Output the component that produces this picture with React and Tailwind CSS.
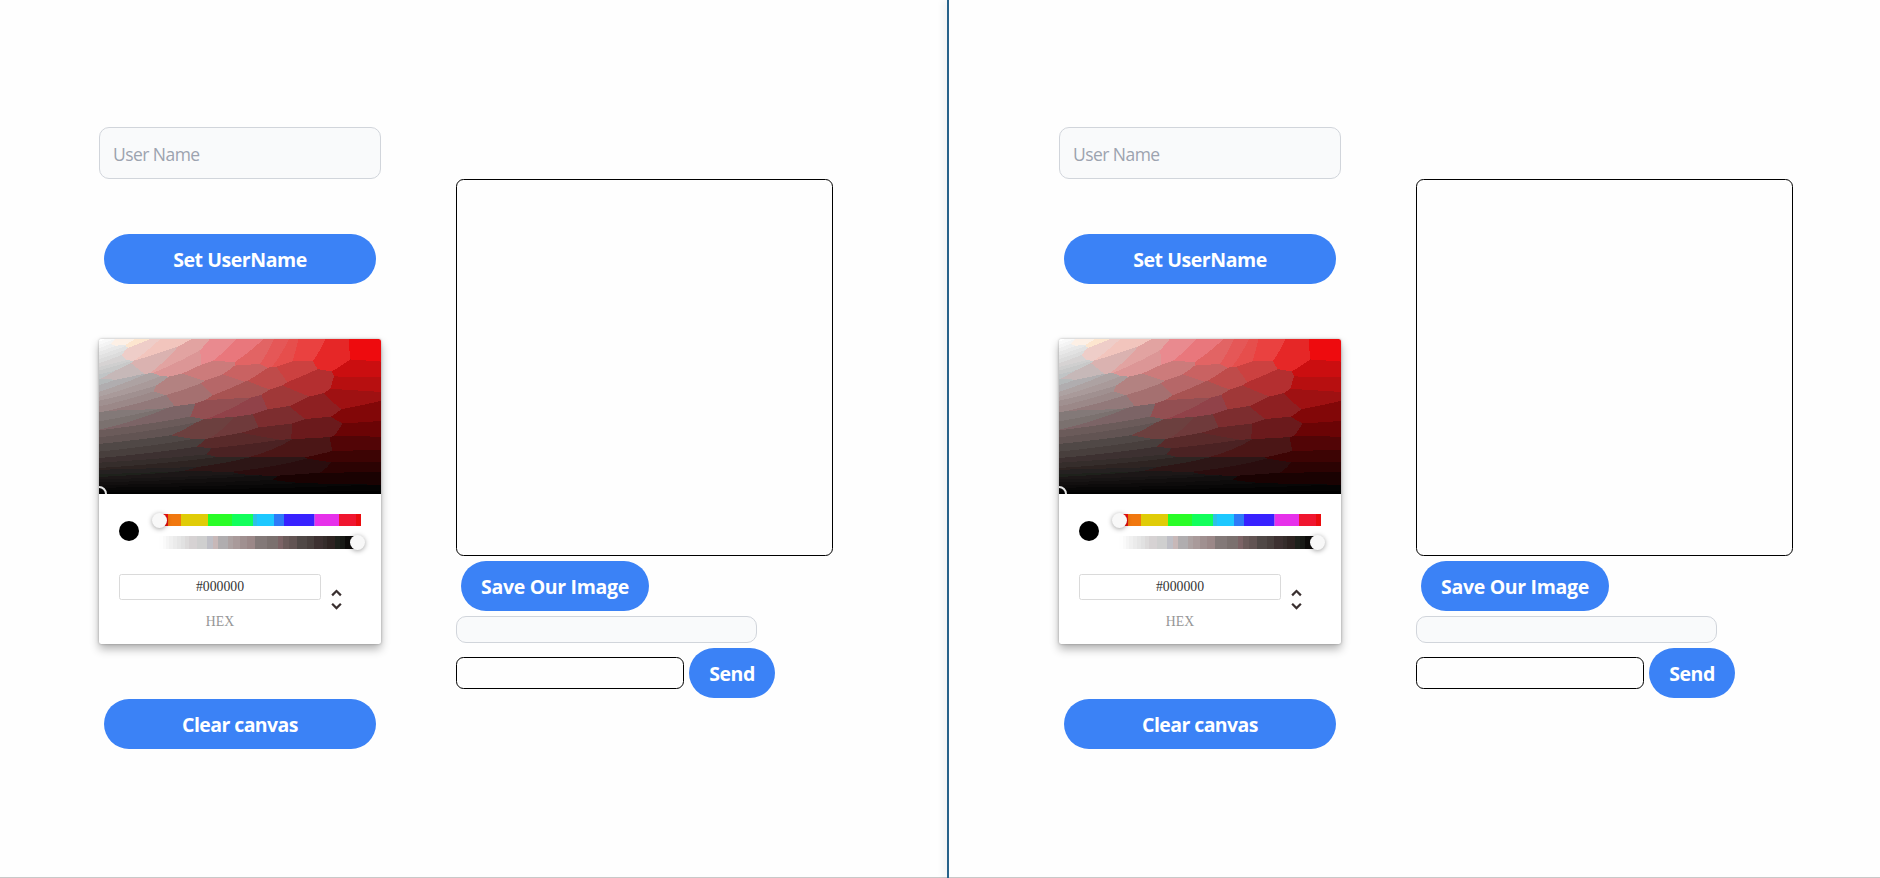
import { useLayoutEffect, useRef } from "react";

const SWATCHES = (
  "ee0b0e e62727 ea4140 e64e4c e55757 e26464 e9777c e98a8f e2a3a1 dc9696 f2c5bd eecdc8 fde6cf fdf0e6 dab2b0 " +
  "cc7b7b c96262 bf4b4a cc4140 b42f30 cb0e10 b70f10 9f1112 820708 6b0405 520506 3d0404 2c0303 1a0202 8e2022 " +
  "a03838 7d2d2f a85352 b66768 b38281 a57070 934f52 914249 6c403f 6f3a3b 642627 6b1a1c 4b2223 4b1616 2a0d0e " +
  "2d1616 592a2a ffffff f9f9f9 f4f4f4 eeeeee e8e8e8 e2e2e2 dcdcdc d6d3d3 cfcfcf c8c9c9 c0c4c5 c6b8b8 b5b9ba " +
  "b0adaf ada2a2 a99a9a a09090 9b8888 92797a 837978 7b716f 7c6466 6b5b5a 625453 504846 483f3d 3d3131 352d2b " +
  "2e2422 252121 1e211b 1c1717 171414 120f0f 0d0b0b 080707 040303 000000"
)
  .split(" ")
  .map((h) => [0, 2, 4].map((i) => parseInt(h.slice(i, i + 2), 16)));

const HUES = [
  [9, "#ed0f0f"], [13, "#f1780f"], [27, "#e0cc07"], [24.3, "#29fd27"], [20.7, "#12ff5b"],
  [4, "#2fc0e6"], [17, "#1dc8ff"], [10, "#2d7af8"], [30.3, "#3821ff"], [0.7, "#a55cf0"],
  [24, "#e631ea"], [17, "#f0152f"], [5, "#eb0b0e"],
];

const ALPHAS = [
  [4, "#fefefe"], [3, "#fafafa"], [3, "#f5f5f5"], [4, "#f0f0f0"], [4, "#ebebeb"], [4, "#e6e6e6"],
  [4, "#e1e1e1"], [4, "#dcdada"], [8, "#d6d2d3"], [10, "#cfcfcf"], [6, "#bfbfc6"], [5, "#c8b8b8"],
  [10, "#b0adaf"], [5, "#ada2a2"], [6.5, "#a99a9a"], [7.5, "#a09090"], [8, "#9b8888"], [12, "#837978"],
  [11, "#7b716f"], [5, "#7c6466"], [6, "#6b5b5a"], [7.5, "#625453"], [10.5, "#504846"], [7, "#483f3d"],
  [9, "#3d3131"], [4, "#352d2b"], [8, "#2e2422"], [5, "#1e211b"], [5, "#181916"], [16, "#0e0c0b"],
];

function Saturation() {
  const ref = useRef(null);
  useLayoutEffect(() => {
    const ctx = ref.current.getContext("2d");
    const w = 282;
    const h = 155;
    const img = ctx.createImageData(w, h);
    for (let y = 0; y < h; y++) {
      for (let x = 0; x < w; x++) {
        const v = 255 * (1 - y / (h - 1));
        const g = v * (1 - x / (w - 1));
        let best = null;
        let dist = Infinity;
        for (const c of SWATCHES) {
          const d = (c[0] - v) ** 2 + (c[1] - g) ** 2 + (c[2] - g) ** 2;
          if (d < dist) {
            dist = d;
            best = c;
          }
        }
        const i = (y * w + x) * 4;
        img.data[i] = best[0];
        img.data[i + 1] = best[1];
        img.data[i + 2] = best[2];
        img.data[i + 3] = 255;
      }
    }
    ctx.putImageData(img, 0, 0);
  }, []);
  return (
    <div className="relative h-[155px] overflow-hidden rounded-t-[2.5px]">
      <canvas ref={ref} width={282} height={155} className="block" />
      <div className="absolute -bottom-2 -left-2 size-4 rounded-full border-2 border-white/90" />
    </div>
  );
}

function Bar({ parts, className }) {
  return (
    <div className={`flex ${className}`}>
      {parts.map(([w, color], i) => (
        <div key={i} style={{ flex: `${w} 0 0`, background: color }} />
      ))}
    </div>
  );
}

const knob = "absolute size-[15px] rounded-full bg-[#f8f8f8] shadow-[0_1px_5px_rgba(0,0,0,0.37)]";

function Picker() {
  return (
    <div className="h-[305px] w-[282px] rounded-[2.5px] bg-white font-['Liberation_Serif',serif] shadow-[0_0_2.5px_rgba(0,0,0,0.3),0_5px_10px_rgba(0,0,0,0.3)]">
      <Saturation />
      <div className="px-5 pt-5">
        <div className="flex">
          <div className="w-10 pt-[7px]">
            <div className="size-5 rounded-full bg-black" />
          </div>
          <div className="flex-1">
            <div className="relative mb-2.5">
              <Bar parts={HUES} className="h-3" />
              <div className={`${knob} -left-[7.5px] -top-[1px]`} />
            </div>
            <div className="relative">
              <Bar parts={ALPHAS} className="h-[13px]" />
              <div className={`${knob} -right-[3.5px] -top-[1px]`} />
            </div>
          </div>
        </div>
        <div className="flex pt-[25px]">
          <div className="w-[202px] text-center text-[13.75px]">
            <div className="h-[26px] rounded-[2.5px] border border-[#dadada] leading-[23px] text-[#333]">#000000</div>
            <div className="mt-[14px] leading-[15px] text-[#969696]">HEX</div>
          </div>
          <svg viewBox="0 0 24 24" className="ml-[1.5px] mt-[11.5px] size-[27px] fill-[#3a3030]">
            <path d="M12,18.17L8.83,15L7.42,16.41L12,21L16.59,16.41L15.17,15M12,5.83L15.17,9L16.58,7.59L12,3L7.41,7.59L8.83,9L12,5.83Z" />
          </svg>
        </div>
      </div>
    </div>
  );
}

function Button({ className = "", children }) {
  return (
    <button className={`h-[50px] whitespace-nowrap rounded-full bg-[#3b82f6] pt-[2px] text-[19.5px] font-bold text-white ${className}`}>
      {children}
    </button>
  );
}

function Board() {
  return (
    <section className="flex items-start">
      <div className="flex w-[282px] flex-col pt-[127px]">
        <input
          placeholder="User Name"
          className="h-[52px] rounded-[10px] border border-[#d1d5db] bg-[#f9fafb] px-[13px] pt-[2px] text-[17.5px] tracking-[-0.55px] placeholder:text-[#9ca3af]"
        />
        <Button className="mx-[5px] mb-[55px] mt-[55px] tracking-[-0.45px]">Set UserName</Button>
        <Picker />
        <Button className="mx-[5px] mt-[55px] tracking-[-0.58px]">Clear canvas</Button>
      </div>
      <div className="ml-[75px] flex flex-col items-start pt-[179px]">
        <div className="size-[377px] rounded-[7.5px] border border-black" />
        <Button className="my-[5px] ml-[5px] w-[188px] tracking-[-0.33px]">Save Our Image</Button>
        <div className="h-[27px] w-[301px] rounded-[10px] border border-[#d1d5db] bg-[#f9fafb]" />
        <div className="mt-[5px] flex items-center gap-[5px]">
          <input className="h-8 w-[228px] rounded-[7.5px] border border-black bg-transparent" />
          <Button className="w-[86px] tracking-[-0.45px]">Send</Button>
        </div>
      </div>
    </section>
  );
}

export default function App() {
  return (
    <main className="flex h-[878px] w-[1880px] overflow-hidden bg-[#fefefe] font-['Open_Sans','Noto_Sans',sans-serif]">
      <div className="w-[947px] shrink-0 border-b border-[#c8c8c8] pl-[99px]">
        <Board />
      </div>
      <div className="w-0.5 shrink-0 bg-[#28628a] shadow-[-1px_0_9px_rgba(0,0,0,0.2)]" />
      <div className="z-10 flex-1 border-b border-[#c8c8c8] bg-[#fefefe] pl-[110px]">
        <Board />
      </div>
    </main>
  );
}
